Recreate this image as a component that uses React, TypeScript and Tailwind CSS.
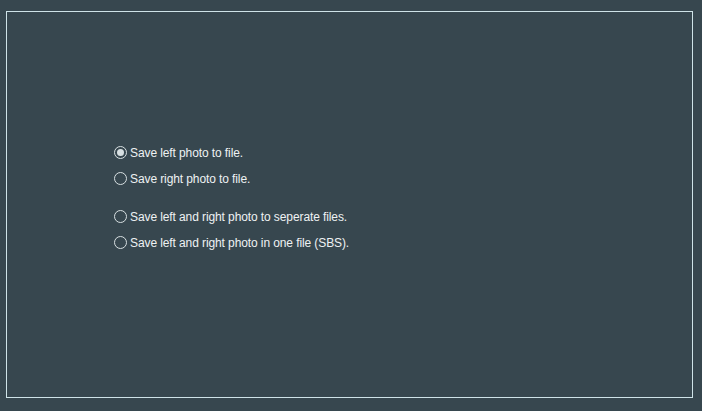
import { useState } from "react";

const options = [
  { id: "left", label: "Save left photo to file." },
  { id: "right", label: "Save right photo to file." },
  { id: "separate", label: "Save left and right photo to seperate files." },
  { id: "sbs", label: "Save left and right photo in one file (SBS)." },
];

function Radio({ checked }: { checked: boolean }) {
  return (
    <span className="w-[13px] h-[13px] rounded-full border border-[#d8e0e2] flex items-center justify-center shrink-0">
      {checked && <span className="w-[7px] h-[7px] rounded-full bg-[#d8e0e2]" />}
    </span>
  );
}

export default function App() {
  const [selected, setSelected] = useState("left");

  return (
    <div className="w-[702px] h-[411px] bg-[#37474f] pt-[11px] pl-[6px] font-['Liberation_Sans',Arial,sans-serif]">
      <div className="w-[687px] h-[387px] border border-[#cfe3e8] pt-[133px] pl-[107px]">
        <div className="flex flex-col">
          {options.map((o, i) => (
            <label
              key={o.id}
              onClick={() => setSelected(o.id)}
              className={`flex items-center gap-[3px] h-[15px] text-[12px] leading-[15px] text-[#eef2f3] cursor-default ${
                i === 0 ? "" : i === 2 ? "mt-[23px]" : "mt-[11px]"
              }`}
            >
              <Radio checked={selected === o.id} />
              <span className="pt-[1px] tracking-[-0.1px]">{o.label}</span>
            </label>
          ))}
        </div>
      </div>
    </div>
  );
}
